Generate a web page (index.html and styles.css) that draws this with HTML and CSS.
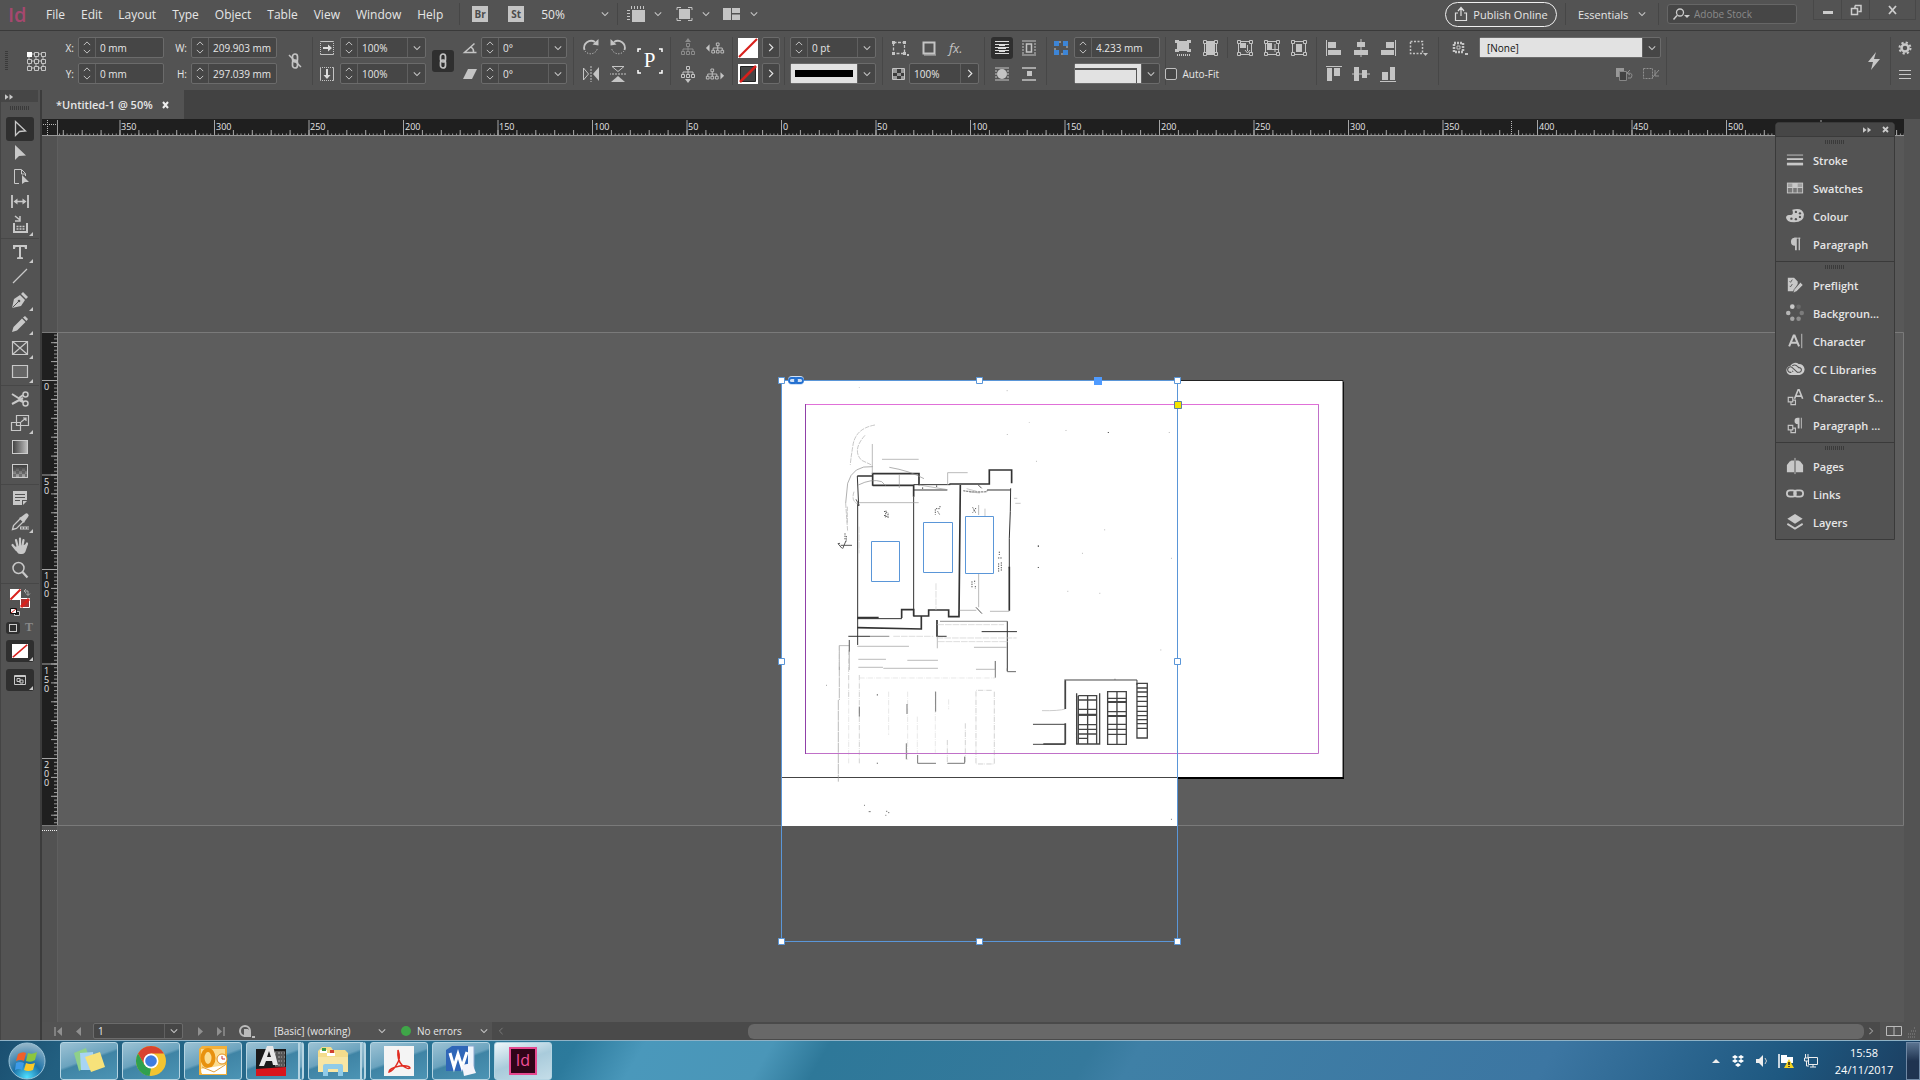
FILE: index.html
```html
<!DOCTYPE html>
<html lang="en">
<head>
<meta charset="UTF-8">
<title>*Untitled-1 @ 50%</title>
<link rel="stylesheet" href="styles.css">
</head>
<body>

<!-- shared icons -->
<svg class="defs" aria-hidden="true">
	<symbol id="down" viewBox="0 0 10 6"><path d="M1 1l4 4 4-4" fill="none" stroke="currentColor" stroke-width="1.3"/></symbol>
	<symbol id="right" viewBox="0 0 6 10"><path d="M1 1l4 4-4 4" fill="none" stroke="currentColor" stroke-width="1.3"/></symbol>
	<symbol id="spin" viewBox="0 0 10 16"><path d="M1 5l4-4 4 4M1 11l4 4 4-4" fill="none" stroke="currentColor" stroke-width="1.2"/></symbol>
	<symbol id="chain" viewBox="0 0 20 20"><g fill="none" stroke="currentColor" stroke-width="1.7"><rect x="7.500" y="3" width="5" height="8" rx="2.500"/><rect x="7.500" y="9" width="5" height="8" rx="2.500"/></g></symbol>
	<symbol id="rotate" viewBox="0 0 20 20"><path d="M3.500 12A7 7 0 0 1 14 4" fill="none" stroke="currentColor" stroke-width="1.8"/><path d="M11.500 6.500l6 1V1z" fill="currentColor"/><path d="M4 13a7 7 0 0 0 12.500-3" fill="none" stroke="currentColor" stroke-dasharray="1.200 1.500"/></symbol>
	<symbol id="flip" viewBox="0 0 20 20"><path d="M2.500 4v12l5-6z" fill="none" stroke="currentColor"/><path d="M10 2v16" stroke="currentColor" stroke-dasharray="2 1"/><path d="M18 3v14l-6-7z" fill="currentColor"/></symbol>
	<symbol id="tree" viewBox="0 0 20 20"><path d="M8.500 5.500h3v3h-3zM3.500 13.500h3v3h-3zM8.500 13.500h3v3h-3zM13.500 13.500h3v3h-3zM10 8.500v5M5 13.500v-2.500h10v2.500" fill="none" stroke="currentColor"/><path d="M10 0l3 4H7z" fill="currentColor"/></symbol>
	<symbol id="treeside" viewBox="0 0 22 20"><path d="M12.500 4.500h3v3h-3zM7.500 12.500h3v3h-3zM12.500 12.500h3v3h-3zM17.500 12.500h3v3h-3zM14 7.500v5M9 12.500V10h10v2.500" fill="none" stroke="currentColor"/><path d="M1 10l4-4v8z" fill="currentColor"/></symbol>
	<symbol id="corners" viewBox="0 0 20 20"><path d="M3.500 3.500h13v13h-13z" fill="none" stroke="currentColor"/><path d="M2.500 2.500h3v3h-3zM14.500 2.500h3v3h-3zM2.500 14.500h3v3h-3zM14.500 14.500h3v3h-3z" fill="#535353" stroke="currentColor"/></symbol>
	<symbol id="alignl" viewBox="0 0 20 20"><path d="M2.500 2v16" stroke="currentColor"/><path d="M4 4h8v6H4zM4 12h13v5H4z" fill="currentColor"/></symbol>
	<symbol id="alignc" viewBox="0 0 20 20"><path d="M10 1v18" stroke="currentColor"/><path d="M6 4h8v5H6zM3 12h14v5H3z" fill="currentColor"/></symbol>
	<symbol id="none" viewBox="0 0 20 20"><path d="M0 0h20v20H0z" fill="#fff"/><path d="M1 19L19 1" stroke="#d8201c" stroke-width="2.200"/></symbol>
	<symbol id="chev2" viewBox="0 0 10 6"><path d="M0 0l4 3-4 3zM5 0l4 3-4 3z" fill="currentColor"/></symbol>
	<symbol id="pilcrow" viewBox="0 0 20 20"><path d="M10 3v9a4.500 4.500 0 0 1 0-9zM10 3h2v14h-2zM14 3h1.500v14H14z" fill="currentColor"/><path d="M9 3h7v1H9z" fill="currentColor"/></symbol>
	<symbol id="copies" viewBox="0 0 20 20"><path d="M2.500 10.500h5v5h-5zM5.500 16v2.500h5v-5H8" fill="none" stroke="currentColor" stroke-width="1.3"/></symbol>
	<symbol id="cc" viewBox="0 0 22 16"><path d="M7 14.500a5 5 0 0 1-1-10 6 6 0 0 1 9-2 6 6 0 0 1 1 12z" fill="#ccc"/><path d="M14 12L8 6.500a3 3 0 1 0-1 5M9 11l-1-1M8 4.500a4.500 4.500 0 0 1 6 1l1 1a2.500 2.500 0 1 1 1 5H13" fill="none" stroke="#555" stroke-width="1.2"/></symbol>
</svg>

<header class="menubar">
	<span class="logo">Id</span>
	<nav class="menus">
		<a href="#">File</a><a href="#">Edit</a><a href="#">Layout</a><a href="#">Type</a><a href="#">Object</a><a href="#">Table</a><a href="#">View</a><a href="#">Window</a><a href="#">Help</a>
	</nav>
	<i class="vsep"></i>
	<button class="badge">Br</button>
	<button class="badge">St</button>
	<select class="zoom" aria-label="Zoom level"><option>50%</option></select>
	<svg class="chev" ><use href="#down"/></svg>
	<i class="vsep"></i>
	<button class="viewbtn" aria-label="View options"><svg width="20" height="18" viewBox="0 0 20 18"><path d="M6 5h13v12H6z" fill="#c4c4c4"/><path d="M5 2.500h14M2.500 5v12" stroke="#c4c4c4" stroke-width="3" stroke-dasharray="1 2"/></svg><svg class="chev"><use href="#down"/></svg></button>
	<button class="viewbtn" aria-label="Screen mode"><svg width="20" height="18" viewBox="0 0 20 18"><path d="M5 4h11v10H5z" fill="#c4c4c4"/><path d="M3 5V2.500h4M14 2.500h4V5M3 13v2.500h4M14 15.500h4V13" fill="none" stroke="#c4c4c4"/></svg><svg class="chev"><use href="#down"/></svg></button>
	<button class="viewbtn" aria-label="Arrange documents"><svg width="20" height="18" viewBox="0 0 20 18"><path d="M1 3h8v12H1zM10 3h8v5h-8zM10 9.500h8V15h-8z" fill="#c4c4c4"/></svg><svg class="chev"><use href="#down"/></svg></button>
	<span class="grow"></span>
	<button class="publish"><svg width="14" height="16" viewBox="0 0 14 16"><path d="M4 7H1.500v7.500h11V7H10M7 10V2M4 5l3-3.500L10 5" fill="none" stroke="#ddd" stroke-width="1.2"/></svg>Publish Online</button>
	<i class="vsep"></i>
	<button class="workspace">Essentials<svg class="chev"><use href="#down"/></svg></button>
	<i class="vsep"></i>
	<label class="search"><svg width="20" height="14" viewBox="0 0 20 14"><path d="M5 8.500L1.500 12.500" stroke="#ccc" stroke-width="1.5"/><circle cx="8" cy="5.500" r="3.500" fill="none" stroke="#ccc" stroke-width="1.300"/><path d="M12 8h6l-3 3z" fill="#ccc"/></svg><input type="search" placeholder="Adobe Stock" aria-label="Adobe Stock"></label>
	<div class="winbtns">
		<button aria-label="Minimise"><svg width="12" height="12"><path d="M1 7h10v3H1z" fill="#ccc"/></svg></button>
		<button aria-label="Restore"><svg width="12" height="12"><path d="M5 1.500h6v6H8.500M5 4V1.500M1.500 4.500h6v6h-6z" fill="none" stroke="#ccc" stroke-width="1.500"/></svg></button>
		<button aria-label="Close"><svg width="12" height="12"><path d="M2 2l7 8M9 2l-7 8" stroke="#ccc" stroke-width="1.800"/></svg></button>
	</div>
</header>

<section class="control">
	<div class="refpoint">
		<i class="grip-v"></i>
		<svg width="20" height="20" viewBox="0 0 20 20"><path d="M3 3h14v14H3zM3 10h14M10 3v14" fill="none" stroke="#c4c4c4"/><g fill="#535353" stroke="#c4c4c4"><path d="M8.500 1.500h4v4h-4zM15.500 1.500h4v4h-4zM1.500 8.500h4v4h-4zM8.500 8.500h4v4h-4zM15.500 8.500h4v4h-4zM1.500 15.500h4v4h-4zM8.500 15.500h4v4h-4zM15.500 15.500h4v4h-4z"/></g><path d="M1 1h5v5H1z" fill="#fff"/></svg>
	</div>
	<div class="group pos">
		<label for="fx">X:</label>
		<div class="field"><svg class="spin"><use href="#spin"/></svg><input id="fx" value="0 mm"></div>
		<label for="fw">W:</label>
		<div class="field"><svg class="spin"><use href="#spin"/></svg><input id="fw" value="209.903 mm"></div>
		<label for="fy">Y:</label>
		<div class="field"><svg class="spin"><use href="#spin"/></svg><input id="fy" value="0 mm"></div>
		<label for="fh">H:</label>
		<div class="field"><svg class="spin"><use href="#spin"/></svg><input id="fh" value="297.039 mm"></div>
		<button class="tall" aria-label="Constrain proportions"><svg class="ic"><use href="#chain"/><path d="M4 4l12 12" stroke="#c4c4c4" stroke-width="1.500"/></svg></button>
	</div>
	<div class="group scale">
		<svg class="ic" viewBox="0 0 20 20"><path d="M3.500 3.500h13v13h-13z" fill="none" stroke="#c4c4c4" /><path d="M3 4v12M17 4v12" stroke="#535353" stroke-dasharray="1 1" stroke-width="2"/><path d="M6 9h5V6.500l4 3.500-4 3.500V11H6z" fill="#ddd"/></svg>
		<div class="field"><svg class="spin"><use href="#spin"/></svg><input aria-label="Scale X" value="100%"><button aria-label="Scale X list"><svg class="chev"><use href="#down"/></svg></button></div>
		<svg class="ic" viewBox="0 0 20 20"><path d="M3.500 3.500h13v13h-13z" fill="none" stroke="#c4c4c4"/><path d="M4 3h12M4 17h12" stroke="#535353" stroke-dasharray="1 1" stroke-width="2"/><path d="M9 5h2v6h2.500L10 15l-3.500-4H9z" fill="#ddd"/></svg>
		<div class="field"><svg class="spin"><use href="#spin"/></svg><input aria-label="Scale Y" value="100%"><button aria-label="Scale Y list"><svg class="chev"><use href="#down"/></svg></button></div>
		<button class="tall pressed" aria-label="Link scale"><svg class="ic"><use href="#chain"/></svg></button>
	</div>
	<div class="group angle">
		<svg class="ic" viewBox="0 0 20 20"><path d="M16.500 14.500h-12l10-9M11 9q3 2 2.500 5" fill="none" stroke="#c4c4c4" stroke-width="1.500"/></svg>
		<div class="field"><svg class="spin"><use href="#spin"/></svg><input aria-label="Rotation" value="0°"><button aria-label="Rotation list"><svg class="chev"><use href="#down"/></svg></button></div>
		<svg class="ic" viewBox="0 0 20 20"><path d="M8 5h9l-5 10H3z" fill="#c4c4c4"/></svg>
		<div class="field"><svg class="spin"><use href="#spin"/></svg><input aria-label="Shear" value="0°"><button aria-label="Shear list"><svg class="chev"><use href="#down"/></svg></button></div>
	</div>
	<div class="group sep icons flips">
		<svg class="ic"><use href="#rotate"/></svg>
		<svg class="ic mirror"><use href="#rotate"/></svg>
		<span class="tall pref"><svg width="26" height="26" viewBox="0 0 26 26"><path d="M1 4V1h3M22 1h3v3M1 22v3h3M22 25h3v-3" fill="none" stroke="#fff" stroke-width="1.500"/></svg><b>P</b></span>
		<svg class="ic"><use href="#flip"/></svg>
		<svg class="ic quarter"><use href="#flip"/></svg>
	</div>
	<div class="group sep icons two">
		<svg class="ic dim"><use href="#tree"/></svg>
		<svg class="ic"><use href="#treeside"/></svg>
		<svg class="ic" viewBox="0 0 20 20"><path d="M8.500 2.500h3v3h-3zM3.500 10.500h3v3h-3zM8.500 10.500h3v3h-3zM13.500 10.500h3v3h-3zM10 5.500v5M5 10.500V8h10v2.500" fill="none" stroke="#c4c4c4"/><path d="M10 19l3-4H7z" fill="#c4c4c4"/></svg>
		<svg class="ic" viewBox="0 0 22 20"><path d="M6.500 4.500h3v3h-3zM1.500 12.500h3v3h-3zM6.500 12.500h3v3h-3zM11.500 12.500h3v3h-3zM8 7.500v5M3 12.500V10h10v2.500" fill="none" stroke="#c4c4c4"/><path d="M21 12l-4-4v8z" fill="#c4c4c4"/></svg>
	</div>
	<div class="group sep swatches">
		<svg width="20" height="20"><use href="#none"/></svg>
		<button class="more" aria-label="Fill"><svg><use href="#right"/></svg></button>
		<svg width="20" height="20" viewBox="0 0 20 20"><path d="M0 0h20v20H0z" fill="#fff"/><path d="M2.500 2.500h15v15h-15z" fill="#444" stroke="#222"/><path d="M2 18L18 2" stroke="#d8201c" stroke-width="2.500"/></svg>
		<button class="more" aria-label="Stroke"><svg><use href="#right"/></svg></button>
	</div>
	<div class="group sep stroke">
		<div class="field"><svg class="spin"><use href="#spin"/></svg><input aria-label="Stroke weight" value="0 pt"><button aria-label="Weight list"><svg class="chev"><use href="#down"/></svg></button></div>
		<div class="field"><span class="sample line"></span><button aria-label="Stroke type"><svg class="chev"><use href="#down"/></svg></button></div>
	</div>
	<div class="group sep effects">
		<div class="row">
			<svg class="ic" viewBox="0 0 20 20"><path d="M4.500 4.500h11v11h-11z" fill="none" stroke="#c4c4c4" stroke-width="1.300" stroke-dasharray="3 1.500"/><path d="M3 3h3v3H3zM14 3h3v3h-3zM3 14h3v3H3zM14 14h3v3h-3z" fill="#c4c4c4"/><path d="M18 16h2v2h-2z" fill="#c4c4c4"/></svg>
			<svg class="ic" viewBox="0 0 20 20"><path d="M5 16h12v2H5z" fill="#888"/><path d="M4.500 4.500h11v11h-11z" fill="#535353" stroke="#c4c4c4" stroke-width="2"/></svg>
			<i class="fx">fx.</i>
		</div>
		<div class="row">
			<svg class="ic" viewBox="0 0 20 20"><path d="M3.500 4.500h12v11h-12z" fill="#3c3c3c" stroke="#c4c4c4"/><path d="M4 5h4v4H4zM12 5h3v4h-3zM8 9h4v3H8zM4 12h4v3H4zM12 12h3v3h-3z" fill="#999"/></svg>
			<div class="field"><input aria-label="Opacity" value="100%"><button aria-label="Opacity slider"><svg class="more-arrow"><use href="#right"/></svg></button></div>
		</div>
	</div>
	<div class="group sep icons two wrap">
		<button class="pressed" aria-label="No text wrap"><svg class="ic" viewBox="0 0 20 20"><path d="M3 3.500h14M3 6.500h14M3 9.500h14M3 12.500h14M3 15.500h14" stroke="#ddd"/><path d="M7 6h6v2H7zM6 9h8v2H6zM7 12h6v2H7z" fill="#ddd"/></svg></button>
		<svg class="ic" viewBox="0 0 20 20"><path d="M3 3h14M3 17h14M3 6h2M3 9h2M3 12h2M3 15h2M15 6h2M15 9h2M15 12h2M15 15h2" stroke="#c4c4c4"/><path d="M7.500 6h5v8h-5z" fill="none" stroke="#c4c4c4" stroke-width="1.500"/></svg>
		<svg class="ic" viewBox="0 0 20 20"><path d="M3 4h14M3 16h14M3 7h2M3 10h2M3 13h2M15 7h2M15 10h2M15 13h2" stroke="#c4c4c4"/><circle cx="10" cy="10" r="5" fill="#c4c4c4"/></svg>
		<svg class="ic" viewBox="0 0 20 20"><path d="M3 4h14M3 16h14" stroke="#c4c4c4" stroke-width="1.500"/><path d="M8 7h5v5H8z" fill="#c4c4c4"/></svg>
	</div>
	<div class="group sep corner">
		<svg class="ic" viewBox="0 0 20 20"><path d="M4 4h12v12H4z" fill="none" stroke="#c4c4c4" stroke-dasharray="2 2"/><path d="M3 3h5v5H3zM12 3h5v5h-5zM3 12h5v5H3zM12 12h5v5h-5z" fill="#3d85d6"/></svg>
		<div class="field"><svg class="spin"><use href="#spin"/></svg><input aria-label="Corner size" value="4.233 mm"></div>
		<span></span>
		<div class="field"><span class="sample edge"></span><button aria-label="Corner shape"><svg class="chev"><use href="#down"/></svg></button></div>
	</div>
	<div class="group sep icons two">
		<svg class="ic" viewBox="0 0 20 20"><path d="M4 3h12v10H4z" fill="#c4c4c4"/><path d="M2 2h4v3H2zM14 2h4v3h-4zM2 11h4v3H2zM14 11h4v3h-4z" fill="#c4c4c4"/><path d="M4 17h13" stroke="#c4c4c4" stroke-dasharray="1 1" stroke-width="2"/></svg>
		<svg class="ic" viewBox="0 0 20 20"><path d="M6 3h9v14H6z" fill="#c4c4c4"/><path d="M3.500 2.500h3v3h-3zM14.500 2.500h3v3h-3zM3.500 14.500h3v3h-3zM14.500 14.500h3v3h-3zM4.500 5v10M16.500 5v10" fill="none" stroke="#c4c4c4"/></svg>
		<label class="autofit"><input type="checkbox">Auto-Fit</label>
	</div>
	<div class="group sepshort icons three">
		<svg class="ic"><use href="#corners"/><path d="M5 5h6v5H5z" fill="#c4c4c4"/><path d="M12.500 7v6M10 12l2.500 3 2.500-3" fill="none" stroke="#c4c4c4"/></svg>
		<svg class="ic"><use href="#corners"/><path d="M5 5h5v7H5z" fill="#c4c4c4"/><path d="M13 6v8M10 11.500h6" fill="none" stroke="#c4c4c4"/></svg>
		<svg class="ic"><use href="#corners"/><path d="M7 6h6v8H7z" fill="#c4c4c4"/></svg>
	</div>
	<div class="group sep icons four">
		<svg class="ic"><use href="#alignl"/></svg>
		<svg class="ic"><use href="#alignc"/></svg>
		<svg class="ic mirror"><use href="#alignl"/></svg>
		<svg class="ic" viewBox="0 0 20 20"><path d="M2.500 3.500h12v12h-12z" fill="none" stroke="#c4c4c4" stroke-width="1.500" stroke-dasharray="2 1.500"/><path d="M15 15h5l-2.500 3z" fill="#c4c4c4"/></svg>
		<svg class="ic quarter"><use href="#alignl"/></svg>
		<svg class="ic quarter"><use href="#alignc"/></svg>
		<svg class="ic unquarter"><use href="#alignl"/></svg>
	</div>
	<div class="group sep style">
		<div class="row">
			<svg class="ic" viewBox="0 0 20 20"><path d="M5 5h9v9H5z" fill="none" stroke="#c4c4c4" stroke-width="2.500" stroke-dasharray="2 1"/><path d="M8 8h3v3H8z" fill="none" stroke="#c4c4c4"/><path d="M16 15h3v2h-3z" fill="#c4c4c4"/></svg>
			<div class="field light"><select aria-label="Object style"><option>[None]</option></select><button aria-label="Object style list"><svg class="chev"><use href="#down"/></svg></button></div>
		</div>
		<div class="row end">
			<svg class="ic dim" viewBox="0 0 20 20"><path d="M2 4h8v9H2z" fill="#ddd"/><path d="M5.500 7.500h7v9h-7z" fill="#333" stroke="#bbb"/><path d="M14 14h3q3-5-3-5M16 6l-3 3 3 2" fill="none" stroke="#ccc"/></svg>
			<svg class="ic dim" viewBox="0 0 20 20"><path d="M2.500 4.500h9v10h-9z" fill="none" stroke="#ccc" stroke-dasharray="2 1"/><path d="M11 14l7-8M14 6v6h4" fill="none" stroke="#ccc"/></svg>
		</div>
	</div>
	<div class="group sep last"></div>
	<button class="bolt" aria-label="Quick apply"><svg width="14" height="18" viewBox="0 0 14 18"><path d="M9 0L1 10h5l-2 8 9-11H7z" fill="#c8c8c8"/></svg></button>
	<div class="group sep icons one">
		<svg class="ic" viewBox="0 0 20 20"><circle cx="10" cy="10" r="3.500" fill="none" stroke="#c8c8c8" stroke-width="2.500"/><circle cx="10" cy="10" r="5.500" fill="none" stroke="#c8c8c8" stroke-width="2" stroke-dasharray="2.200 2.120"/></svg>
		<svg class="ic" viewBox="0 0 20 20"><path d="M4 6.500h12M4 10.500h12M4 14.500h12" stroke="#c8c8c8"/></svg>
	</div>
</section>

<main class="work">
	<aside class="tools">
		<div class="toolhead"><svg width="9" height="6"><use href="#chev2"/></svg></div>
		<i class="grip"></i>
		<button class="pressed" aria-label="Selection"><svg class="ic" viewBox="0 0 20 20"><path d="M5.500 2.500v14l4-4 6-.500z" fill="none" stroke="#c8c8c8" stroke-width="1.300"/></svg></button>
		<button aria-label="Direct selection"><svg class="ic" viewBox="0 0 20 20"><path d="M5 2v15l4-4 7-.500z" fill="#c8c8c8"/></svg></button>
		<button aria-label="Page"><svg class="ic" viewBox="0 0 20 20"><path d="M9 16.500H4.500v-14h7l4 4V9M11.500 3v4h4" fill="none" stroke="#c8c8c8"/><path d="M12 8v9l3-2h4z" fill="#c8c8c8"/></svg></button>
		<button aria-label="Gap"><svg class="ic" viewBox="0 0 20 20"><path d="M2 4v13M18 4v13" stroke="#c8c8c8" stroke-width="1.800"/><path d="M6 10.500h8" stroke="#c8c8c8" stroke-width="1.500"/><path d="M3.500 10.500l4-3v6zM16.500 10.500l-4-3v6z" fill="#c8c8c8"/></svg></button>
		<button class="sub" aria-label="Content collector"><svg class="ic" viewBox="0 0 20 20"><path d="M4 8v9h13V8" fill="none" stroke="#c8c8c8" stroke-width="2"/><path d="M6.500 11.500h8M6.500 14h8" stroke="#c8c8c8" stroke-width="1.500" stroke-dasharray="2 1"/><path d="M5 1l5 4M10 1v5H5" fill="none" stroke="#c8c8c8" stroke-width="1.500"/></svg></button>
		<hr>
		<button class="sub" aria-label="Type"><svg class="ic" viewBox="0 0 20 20"><path d="M3 3h14v4h-2l-.500-2H11v10l2 .500V17H7v-1.500L9 15V5H5.500L5 7H3z" fill="#c8c8c8"/></svg></button>
		<button aria-label="Line"><svg class="ic" viewBox="0 0 20 20"><path d="M3 17L17 3" stroke="#c8c8c8" stroke-width="1.300"/></svg></button>
		<button class="sub" aria-label="Pen"><svg class="ic" viewBox="0 0 20 20"><path d="M2 18l2-9 6-4 5 5-4 6z" fill="#c8c8c8"/><path d="M11 4l2-2 5 5-2 2z" fill="#c8c8c8"/><path d="M2.500 17.500l6-6" stroke="#535353"/><circle cx="9" cy="11" r="1.300" fill="#535353"/></svg></button>
		<button class="sub" aria-label="Pencil"><svg class="ic" viewBox="0 0 20 20"><path d="M2 18l1.500-5L12 4.500l3.500 3.500L7 16.500zM13 3.500L15 2l3 3-1.500 2z" fill="#c8c8c8"/></svg></button>
		<button class="sub" aria-label="Rectangle frame"><svg class="ic" viewBox="0 0 20 20"><path d="M2.500 3.500h15v13h-15zM2.500 3.500l15 13M17.500 3.500l-15 13" fill="none" stroke="#c8c8c8" stroke-width="1.200"/></svg></button>
		<button class="sub" aria-label="Rectangle"><svg class="ic" viewBox="0 0 20 20"><path d="M2.500 3.500h15v12h-15z" fill="#666" stroke="#c8c8c8" stroke-width="1.200"/></svg></button>
		<hr>
		<button aria-label="Scissors"><svg class="ic" viewBox="0 0 20 20"><path d="M2 5l11 7M2 15l11-6" stroke="#c8c8c8" stroke-width="2"/><circle cx="15.500" cy="5.500" r="2.500" fill="none" stroke="#c8c8c8" stroke-width="1.500"/><circle cx="15.500" cy="14.500" r="2.500" fill="none" stroke="#c8c8c8" stroke-width="1.500"/><path d="M9 9l4-3M9 11l4 2" stroke="#c8c8c8" stroke-width="2"/></svg></button>
		<button class="sub" aria-label="Free transform"><svg class="ic" viewBox="0 0 20 20"><path d="M6.500 2.500h12v10h-12zM1.500 9.500h9v8h-9zM11 9l5-4M13 5h3v3" fill="none" stroke="#c8c8c8" stroke-width="1.200"/></svg></button>
		<button aria-label="Gradient swatch"><span class="grad"></span></button>
		<button aria-label="Gradient feather"><span class="grad feather"></span></button>
		<hr>
		<button aria-label="Note"><svg class="ic" viewBox="0 0 20 20"><path d="M3 3h14v9h-5v5H3zM13 13h4l-4 4z" fill="#c8c8c8"/><path d="M5 6.500h10M5 9.500h10M5 12.500h5" stroke="#535353"/></svg></button>
		<button class="sub" aria-label="Eyedropper"><svg class="ic" viewBox="0 0 20 20"><path d="M2.500 17.500l1-4 7-7 3 3-7 7z" fill="none" stroke="#c8c8c8" stroke-width="1.300"/><path d="M9 6l5 5 1-2 3-4a2 2 0 0 0-3-3l-4 3z" fill="#c8c8c8"/><path d="M10 16h9" stroke="#c8c8c8" stroke-width="3"/><path d="M11 16h8" stroke="#535353" stroke-width="1.200" stroke-dasharray="2 1"/></svg></button>
		<button aria-label="Hand"><svg class="ic" viewBox="0 0 20 20"><path d="M4 11l3 5q1 2 3 2h2q3 0 4-4l2-6" fill="#c8c8c8"/><path d="M2.500 9l4 5M6 4l2 8M10 2.500V11M13.500 4L12 12M17 7.500L14 13" stroke="#c8c8c8" stroke-width="2.200" stroke-linecap="round"/></svg></button>
		<button aria-label="Zoom"><svg class="ic" viewBox="0 0 20 20"><circle cx="8.500" cy="8" r="5.500" fill="none" stroke="#c8c8c8" stroke-width="1.500"/><path d="M12.500 12l5 5.500" stroke="#c8c8c8" stroke-width="2.200"/></svg></button>
		<hr>
		<svg class="fillstroke" width="24" height="30" viewBox="0 0 24 30"><path d="M2 2h11v11H2z" fill="#fff"/><path d="M2.500 12.500l10-10" stroke="#d8201c" stroke-width="2"/><path d="M12.500 11.500h9v9h-9z" fill="#a33" stroke="#fff"/><path d="M13 20l8-8" stroke="#d8201c" stroke-width="3"/><path d="M16 4h4v4M18 2l-2 2 2 2M18 6.500l2 2 2-2" fill="none" stroke="#aaa"/><path d="M6.500 24.500h5v4h-5z" fill="#222" stroke="#ccc"/><path d="M2.500 21.500h6v5h-6z" fill="#fff" stroke="#111"/><path d="M3 26l5-4" stroke="#d8201c"/></svg>
		<div class="affects"><button class="pressed" aria-label="Affects container"><i></i></button><b>T</b></div>
		<button class="pressed wide sub" aria-label="Apply none"><svg width="16" height="14" viewBox="0 0 20 20" preserveAspectRatio="none"><use href="#none"/></svg></button>
		<button class="pressed wide sub" aria-label="Screen mode"><svg width="14" height="12" viewBox="0 0 14 12"><path d="M1.500 1.500h11v9h-11zM1 2.500h12M4 4.500h3v3H4zM7 6h3v3H7z" fill="none" stroke="#c8c8c8"/></svg></button>
	</aside>

	<section class="document">
		<div class="tabs"><div class="tab">*Untitled-1 @ 50%<button aria-label="Close tab"><svg width="8" height="8"><path d="M1 1l5 6M6 1L1 7" stroke="#eee" stroke-width="2"/></svg></button></div></div>
		<svg class="board">
			<defs>
				<pattern id="tick2" width="3.780" height="5" x="781" y="131" patternUnits="userSpaceOnUse"><path d="M0 2.500h1v3H0z" fill="#999"/></pattern>
				<pattern id="tick10" width="18.900" height="6" x="781" y="130" patternUnits="userSpaceOnUse"><path d="M0 0h1v6H0z" fill="#a5a5a5"/></pattern>
				<pattern id="tick50" width="94.500" height="16" x="781" y="120" patternUnits="userSpaceOnUse"><path d="M0 0h1v16H0z" fill="#a5a5a5"/></pattern>
				<pattern id="vt2" width="3" height="3.780" x="54" y="380" patternUnits="userSpaceOnUse"><path d="M0 0h3v1H0z" fill="#999"/></pattern>
				<pattern id="vt10" width="6" height="18.900" x="51" y="380" patternUnits="userSpaceOnUse"><path d="M0 0h6v1H0z" fill="#a5a5a5"/></pattern>
				<pattern id="vt50" width="16" height="94.500" x="42" y="380" patternUnits="userSpaceOnUse"><path d="M0 0h16v1H0z" fill="#a5a5a5"/></pattern>
			</defs>
			<g transform="translate(-42 -119)">
				<path d="M42 119h1862v904H42z" fill="#585858"/>
				<path d="M58 332h1846v494H58z" fill="#5d5d5d"/>
				<path d="M42 119h15v904H42z" fill="#525252"/>
				<path d="M57.500 136v887" stroke="#5f5f5f"/>
				<path d="M42 332.500h1861.500v493H42" fill="none" stroke="#7a7a7a"/>

				<!-- horizontal ruler -->
				<path d="M42 119h1862v17H42z" fill="#1f1f1f"/>
				<path d="M58 131h1846v5H58z" fill="url(#tick2)"/>
				<path d="M58 130h1846v6H58z" fill="url(#tick10)"/>
				<path d="M58 120h1846v16H58z" fill="url(#tick50)"/>
				<path d="M57.500 120v16M42 135.500h1862" stroke="#999"/>
				<path d="M47.500 120v15M43 124.500h14M1511.500 121v14" stroke="#bbb" stroke-dasharray="1 1"/>
				<g class="rule">
					<text x="121" y="130">350</text><text x="216" y="130">300</text><text x="310" y="130">250</text><text x="405" y="130">200</text><text x="499" y="130">150</text><text x="594" y="130">100</text><text x="688" y="130">50</text><text x="783" y="130">0</text><text x="877" y="130">50</text><text x="972" y="130">100</text><text x="1066" y="130">150</text><text x="1161" y="130">200</text><text x="1255" y="130">250</text><text x="1350" y="130">300</text><text x="1444" y="130">350</text><text x="1539" y="130">400</text><text x="1633" y="130">450</text><text x="1728" y="130">500</text>
				</g>

				<!-- vertical ruler -->
				<path d="M42 333h15v492H42z" fill="#1f1f1f"/>
				<path d="M54 333h3v492h-3z" fill="url(#vt2)"/>
				<path d="M51 333h6v492h-6z" fill="url(#vt10)"/>
				<path d="M42 333h15v492H42z" fill="url(#vt50)"/>
				<path d="M57.500 333v492" stroke="#999"/>
				<path d="M42 830.500h15" stroke="#eee" stroke-dasharray="1 1"/>
				<g class="rule">
					<text x="44" y="390">0</text>
					<text y="485"><tspan x="44">5</tspan><tspan x="44" dy="9">0</tspan></text>
					<text y="579"><tspan x="44">1</tspan><tspan x="44" dy="9">0</tspan><tspan x="44" dy="9">0</tspan></text>
					<text y="674"><tspan x="44">1</tspan><tspan x="44" dy="9">5</tspan><tspan x="44" dy="9">0</tspan></text>
					<text y="768"><tspan x="44">2</tspan><tspan x="44" dy="9">0</tspan><tspan x="44" dy="9">0</tspan></text>
				</g>

				<!-- page and placed scan -->
				<path d="M783 382h561v397H783z" fill="#000"/>
				<path d="M781 380h562v397H781z" fill="#fff"/>
				<path d="M781 381h396v445H781z" fill="#fff"/>
				<path d="M781 777.500h397" stroke="#444"/>
				<path d="M1177 380.500h166v397" fill="none" stroke="#222"/>
				<path d="M782 827h395v114H782z" fill="#575757"/>

				<g transform="translate(770 370) scale(.3333)" fill="none" stroke="#333" stroke-width="3">
					<path stroke-width="5" d="M308 347V311H447v35M308 346h123v34M262 318h46M538 342h120v-42h67v40M571 345l-4 395h-31v-20h-60v18h-44M395 744v-25h36v20M262 773l192 4v-37M718 590v132M501 750v50M262 743h64"/>
					<path d="M262 318l4 90M263 400v425M431 380V740M431 344h110M432 360h100M722 355l-1 70-3 80v90M652 360h70M262 746h134M635 785h106M712 754v149M235 799h65M503 799h27"/>
					<path stroke="#555" stroke-width="2" d="M510 754h202M300 799h58"/>
					<path stroke="#999" stroke-width="2" d="M307 222v90M336 268h110M533 345v-37h60M388 312v42M266 398h180M569 721h50M660 724h58M626 405v30M626 612v100M502 800v35M262 829h155M612 832h98M265 868h83M265 892h74M340 895h164M412 871h92M618 898h58v-25M238 810v90M208 900V827h30M447 345l85 14"/>
					<path stroke="#ccc" stroke-width="2" d="M500 804h240M504 815h210M502 764h200M370 799h120M498 640v80M267 470v80" stroke-dasharray="20 3"/>
					<path stroke="#888" stroke-width="2" d="M358 292q60 10 104 34M308 290q-60-5-75 50l-6 60M265 345q40-20 70-10l12 12"/>
					<path stroke="#aaa" stroke-width="2" d="M315 165q-58 10-66 60t-8 60M285 196q-40 45-10 75l30 14M252 365q-10 30 14 38M227 400l6 85M232 410v50" stroke-dasharray="14 3"/>
					<path stroke="#555" d="M618 712l18 19M258 388l10 18M625 345l10 10M458 352v5M500 346v5M216 535l-12-14 6-1M212 526h34M218 536l10-24"/>
					<path stroke="#888" stroke-width="4" d="M580 362q30 6 70 3l4-6" stroke-dasharray="7 2"/>
					<path stroke="#555" stroke-dasharray="4 3" stroke-width="3" d="M342 424l14 6M342 436l14 6M348 422l-2 22M354 432v12M496 418v16M498 416h12M503 424l6 10M510 408v4M608 412l10 18M618 414l-10 14M606 634v18M614 632v8M616 648v8M688 545v10M684 564h12M686 580v26M694 577v28M225 490v20M229 498v16"/>
					<path stroke="#aaa" stroke-width="2" d="M732 385h10M736 400h16M645 416v22M590 356l30 8M600 366l30 3"/>
					<path stroke="#333" d="M805 526v5M805 591v3M1015 186v3"/>
					<path stroke="#999" stroke-width="2" d="M798 274h3M936 550h3M1203 565h3M1198 186v3M712 192v3M268 52v2M778 156v2M888 180v3M710 62h3M1004 478v3M892 664h3M988 670h3M1171 840h3"/>
				</g>

				<g transform="translate(770 600) scale(.3333)" fill="none" stroke="#444" stroke-width="3">
					<path stroke="#666" d="M712 205v10h26M238 120v35"/>
					<path stroke="#999" stroke-width="2" d="M205 300v245M208 200v100" stroke-dasharray="30 2"/>
					<path stroke="#bbb" stroke-width="2" d="M208 136v64M236 150v150M268 225v265M618 490V271h48M673 275v217h-54M586 370v120M532 420v70" stroke-dasharray="16 4 2 3"/>
					<path stroke="#ddd" stroke-width="2" d="M236 300v190M356 275v130M413 275v205M496 273v185M536 298v30M442 350v110M268 234h408" stroke-dasharray="16 4 2 3"/>
					<path stroke="#777" d="M268 320v30M411 312v30M497 275v60M409 430v48M443 465v25h55M532 490h52v-20M322 282v5M322 488v4M676 183v50"/>
					<path d="M883 240h218v15M886 240v87M789 373h97v60h-97"/>
					<path stroke="#ccc" d="M886 327q-20 6-70 5"/>
					<path stroke-width="5" d="M886 242v85M886 370v62M820 432h66"/>
					<path stroke-width="4" d="M920 280v152h69V280M925 287h55v143M925 287v143M953 287v143M925 300h55M925 328h55M925 345h55M925 374h55M925 388h55M925 402h55M925 415h30"/>
					<path stroke-width="4" d="M1013 275h56v158h-56zM1041 275v158M1013 295h56M1013 305h56M1013 335h56M1013 348h56M1013 373h56M1013 388h56M1013 403h56M1101 250h31v164h-31zM1101 264h31M1101 276h31M1101 290h31M1101 304h31M1101 319h31M1101 334h31M1101 347h31M1101 359h31M1101 371h31M1101 385h31"/>
					<path stroke="#777" d="M296 635h6M348 634h4M354 638h4M282 616h3M346 646h3M1203 658h3M169 256h2M1033 238h4"/>
					<path stroke-width="6" d="M925 344h55M1013 306h56M1013 348h56"/>
				</g>

				<path d="M1318.500 404v349.500H805.500" fill="none" stroke="#c070c8"/>
				<path d="M1319 404.500H805" stroke="#e070d8"/>
				<path d="M805.500 404v350" stroke="#9040a8"/>

				<g fill="#fff" stroke="#5a96d8">
					<path d="M871.500 541.500h28v40h-28zM923.500 522.500h29v50h-29zM965.500 516.500h28v57h-28z"/>
					<path d="M781.500 380.500h396v561h-396z" fill="none"/>
					<path d="M778.500 377.500h6v6h-6zM976.500 377.500h6v6h-6zM1174.500 377.500h6v6h-6zM778.500 658.500h6v6h-6zM1174.500 658.500h6v6h-6zM778.500 938.500h6v6h-6zM976.500 938.500h6v6h-6zM1174.500 938.500h6v6h-6z"/>
				</g>
				<path d="M1094 377h8v8h-8z" fill="#4f9bff"/>
				<path d="M1174.500 401.500h7v7h-7z" fill="#f5e500" stroke="#5a7fa8"/>
				<rect x="788" y="376" width="16" height="9" rx="4" fill="#cfe0f6"/>
				<g fill="none" stroke="#2470d0" stroke-width="1.800"><rect x="789" y="378" width="8" height="5" rx="2.500"/><rect x="795" y="378" width="8" height="5" rx="2.500"/></g>
			</g>
		</svg>
		<footer class="status">
			<button class="nav dim" aria-label="First page"><svg width="9" height="9"><path d="M1 0v9" stroke="#ccc" stroke-width="1.500"/><path d="M8 0v9L3 4.500z" fill="#ccc"/></svg></button>
			<button class="nav dim" aria-label="Previous page"><svg width="9" height="9"><path d="M7 0v9L2 4.500z" fill="#ccc"/></svg></button>
			<div class="field pageno"><input aria-label="Page" value="1"><button aria-label="Page list"><svg class="chev"><use href="#down"/></svg></button></div>
			<button class="nav dim" aria-label="Next page"><svg width="9" height="9"><path d="M2 0v9l5-4.500z" fill="#ccc"/></svg></button>
			<button class="nav dim" aria-label="Last page"><svg width="9" height="9"><path d="M1 0v9l5-4.500z" fill="#ccc"/><path d="M8 0v9" stroke="#ccc" stroke-width="1.500"/></svg></button>
			<button class="nav open" aria-label="Open"><svg width="18" height="14" viewBox="0 0 18 14"><circle cx="7" cy="7" r="5" fill="none" stroke="#bbb" stroke-width="2"/><path d="M6 5h4l3 3v5H6z" fill="#bbb"/><path d="M14 12h3v2h-3z" fill="#bbb"/></svg></button>
			<button class="profile">[Basic] (working)<svg class="chev"><use href="#down"/></svg></button>
			<button class="errors"><i></i>No errors<svg class="chev"><use href="#down"/></svg></button>
			<div class="scroll"><svg width="6" height="8" viewBox="0 0 6 10"><path d="M5 1L1 5l4 4" fill="none" stroke="#888"/></svg><span></span><svg width="6" height="8"><use href="#right"/></svg></div>
			<svg class="split" width="40" height="16"><path d="M6.500 3.500h15v9h-15zM14 3v10" fill="none" stroke="#bbb"/><path d="M34 5h2M31 8h5M28 11h8M28 14h8" stroke="#888" stroke-dasharray="1 1"/></svg>
		</footer>
	</section>

	<aside class="panels">
		<div class="panelhead"><svg width="9" height="6"><use href="#chev2"/></svg><button aria-label="Close panels"><svg width="7" height="7"><path d="M1 1l5 5M6 1L1 6" stroke="#ccc" stroke-width="1.800"/></svg></button></div>
		<div class="dock">
			<i class="grip"></i>
			<button><svg class="ic" viewBox="0 0 20 20"><path d="M1 4.500h18" stroke="#c8c8c8"/><path d="M1 9h18" stroke="#c8c8c8" stroke-width="2"/><path d="M1 14.500h18" stroke="#c8c8c8" stroke-width="3"/></svg>Stroke</button>
			<button><svg class="ic" viewBox="0 0 20 20"><path d="M1 4h18v12H1z" fill="#c8c8c8"/><path d="M2 5h5v4H2zM13 5h5v4h-5z" fill="#a0a0a0"/><path d="M2 10h5v5H2zM8 10h4v5H8zM13 10h5v5h-5z" fill="#777"/></svg>Swatches</button>
			<button><svg class="ic" viewBox="0 0 20 20"><path d="M7 3q11-3 13 5 0 9-11 9-9 0-9-6 1-3 5-2 4 0 2-6z" fill="#c8c8c8"/><g fill="#535353"><circle cx="11" cy="5.500" r="1.300"/><circle cx="15.500" cy="7" r="1.300"/><circle cx="15.500" cy="11" r="1.300"/><circle cx="11" cy="13.500" r="1.300"/><circle cx="6" cy="13" r="1.300"/></g></svg>Colour</button>
			<button><svg class="ic"><use href="#pilcrow"/></svg>Paragraph</button>
		</div>
		<div class="dock">
			<i class="grip"></i>
			<button><svg class="ic" viewBox="0 0 20 20"><path d="M2 2h7l4 4v3l-5 8H2z" fill="#c8c8c8"/><path d="M4 6l1 1 2-3M4 11l1 1 2-3" fill="none" stroke="#535353"/><path d="M8 19l1-4 7-8 3 3-7 7z" fill="#c8c8c8" stroke="#535353" stroke-width=".7"/></svg>Preflight</button>
			<button><svg class="ic" viewBox="0 0 20 20"><g fill="#c8c8c8"><circle cx="7" cy="3" r="2.600"/><circle cx="2.500" cy="10" r="2.500" opacity=".85"/><circle cx="7" cy="16.500" r="2.500" opacity=".7"/><circle cx="14" cy="16.500" r="2.500" opacity=".5"/><circle cx="17.500" cy="10" r="2.500" opacity=".35"/><circle cx="14" cy="3" r="2.500" opacity=".18"/></g></svg>Backgroun...</button>
			<button><svg class="ic" viewBox="0 0 20 20"><path d="M3.500 16L8.500 4h1l5 12M5 12h8" fill="none" stroke="#c8c8c8" stroke-width="2.200"/><path d="M17.500 2v16" stroke="#c8c8c8"/></svg>Character</button>
			<button><svg class="ic" viewBox="0 0 22 16"><use href="#cc"/></svg>CC Libraries</button>
			<button><svg class="ic" viewBox="0 0 20 20"><use href="#copies"/><path d="M9.500 12L13.500 2h1l4 10M11 9h6" fill="none" stroke="#c8c8c8" stroke-width="1.800"/></svg>Character S...</button>
			<button><svg class="ic" viewBox="0 0 20 20"><use href="#copies"/><path d="M13 2v7a3.500 3.500 0 0 1 0-7zM13 2h2v12h-2zM16.500 2h1v12h-1z" fill="#c8c8c8"/></svg>Paragraph ...</button>
		</div>
		<div class="dock">
			<i class="grip"></i>
			<button><svg class="ic" viewBox="0 0 20 20"><path d="M6 4h3v13H1V9l4-5v5H2M14 4h-3v13h8V9l-4-5v5h3" fill="#c8c8c8"/><path d="M10 1v18" stroke="#c8c8c8"/></svg>Pages</button>
			<button><svg class="ic" viewBox="0 0 20 20"><g fill="none" stroke="#c8c8c8" stroke-width="2"><rect x="1" y="6" width="10" height="7" rx="3.500"/><rect x="9" y="6" width="10" height="7" rx="3.500"/></g></svg>Links</button>
			<button><svg class="ic" viewBox="0 0 20 20"><path d="M10 1l8.500 5.500L10 12 1.500 6.500z" fill="#c8c8c8"/><path d="M2 11l8 5 8-5 1 2-9 5.500L1 13z" fill="#c8c8c8"/></svg>Layers</button>
		</div>
	</aside>
</main>

<footer class="taskbar">
	<button class="start" aria-label="Start"><svg width="38" height="38" viewBox="0 0 38 38"><defs><radialGradient id="orb" cx=".5" cy=".95" r=".9"><stop offset="0" stop-color="#4fe0ff"/><stop offset=".45" stop-color="#1c72a8"/><stop offset="1" stop-color="#8fb2c6"/></radialGradient></defs><circle cx="19" cy="19" r="18" fill="url(#orb)" stroke="#9cc4d8"/><path d="M10 12q5-3 8-1l-2 8q-4-2-8 0z" fill="#f0602a"/><path d="M20 11q4 2 9-1l-2 8q-4 3-9 1z" fill="#8cc63e"/><path d="M8 21q4-2 8 0l-2 7q-3-2-7 0z" fill="#3d9be8"/><path d="M18 21q4 2 9 0l-2 7q-5 2-9 0z" fill="#fbc928"/></svg></button>
	<button class="task" aria-label="Sticky Notes"><svg width="34" height="32" viewBox="0 0 34 32"><path d="M2 8l12-5 5 16-12 7z" fill="#8fd08a"/><path d="M8 8l13-1 1 18H9z" fill="#a8d4f4"/><path d="M13 12l15-5 5 15-14 5z" fill="#f7e27a"/></svg></button>
	<button class="task" aria-label="Chrome"><svg width="32" height="32" viewBox="0 0 32 32"><circle cx="16" cy="16" r="15" fill="#f4c430"/><path d="M3 8.500A15 15 0 0 1 29 8.500H16L9.500 19.700z" fill="#d9432f"/><path d="M3 8.500L9.500 19.700 16 23l-1.500 8A15 15 0 0 1 3 8.500z" fill="#2fa04e"/><circle cx="16" cy="16" r="7.500" fill="#fff"/><circle cx="16" cy="16" r="5.800" fill="#3f7de0"/></svg></button>
	<button class="task" aria-label="Outlook"><svg width="32" height="32" viewBox="0 0 32 32"><path d="M2 4l3-3h25v29H2z" fill="#f3b03a"/><path d="M4 4h24v24H4z" fill="#fbdc90"/><ellipse cx="11" cy="13" rx="5.500" ry="8" fill="none" stroke="#e8920f" stroke-width="4"/><circle cx="25" cy="14" r="5" fill="#fff" stroke="#e09020"/><path d="M25 11v3h3" fill="none" stroke="#c33"/><path d="M4 24l12-2 13-2v9H5z" fill="#fff"/><path d="M5 22l12 5 11-7" fill="none" stroke="#e0a040"/></svg></button>
	<button class="task stacked" aria-label="AutoCAD"><svg width="32" height="32" viewBox="0 0 32 32"><path d="M1 4h30v27H1z" fill="#1a1a1a"/><path d="M20 6h10v16H20z" fill="#555"/><path d="M20 8h10M20 12h10M20 16h10M20 20h10" stroke="#aaa" stroke-dasharray="1 2 2 1"/><path d="M1 24l30-2v9H1z" fill="#d8161c"/><path d="M4 21L12 1h6l5 19h-5l-1-4h-6l-2 5zM12 12h4l-2-6z" fill="#e8e8e8" fill-rule="evenodd"/></svg></button>
	<button class="task stacked" aria-label="Explorer"><svg width="34" height="32" viewBox="0 0 34 32"><path d="M2 6l4-4h9l2 3h12l3 3v19H2z" fill="#f4dc8c"/><path d="M4 5h7v3H4zM11 8h8v3h-8z" fill="#fff"/><path d="M6 3h4v3H6z" fill="#3a9a48"/><path d="M14 5h4v3h-4z" fill="#d04030"/><path d="M2 12h30v15H2z" fill="#f8e6a4"/><path d="M7 31V21q0-2 2-2h16q2 0 2 2v10h-5v-7H12v7z" fill="#8fcbe8"/></svg></button>
	<button class="task" aria-label="Acrobat"><svg width="30" height="30" viewBox="0 0 30 30"><path d="M0 0h30v30H0z" fill="#f4f4f4"/><path d="M14 4q3 8-1 14-4 7-8 8 0-4 11-6 9-1 10 2-2 2-8-3-5-5-4-15z" fill="none" stroke="#e02b20" stroke-width="1.500"/></svg></button>
	<button class="task" aria-label="Word"><svg width="32" height="32" viewBox="0 0 32 32"><path d="M8 1h21v24H8z" fill="#eef4fc" stroke="#8aa8d0"/><path d="M1 5l6-4h16v25H1z" fill="#2f66b8"/><path d="M5 8l4 14 4-13 4 13 5-15" fill="none" stroke="#fff" stroke-width="3"/><path d="M17 20l10-2 4 10-12 3z" fill="#f4f4fa"/></svg></button>
	<button class="task active" aria-label="InDesign"><span>Id</span></button>
	<span class="grow"></span>
	<div class="tray">
		<svg width="10" height="12"><path d="M1 8h8L5 4z" fill="#eee"/></svg>
		<svg width="16" height="14" viewBox="0 0 16 14"><path d="M5 1l3 2-3 2-3-2zM11 1l3 2-3 2-3-2zM5 5l3 2-3 2-3-2zM11 5l3 2-3 2-3-2zM8 9l3 2-3 2-3-2z" fill="#fff"/></svg>
		<svg width="14" height="14" viewBox="0 0 14 14"><path d="M1 5h3l4-4v12L4 9H1z" fill="#eee"/><path d="M10 4q3 3 0 6" fill="none" stroke="#ccc"/></svg>
		<svg width="16" height="16" viewBox="0 0 16 16"><path d="M1 1v14" stroke="#fff" stroke-width="1.500"/><path d="M3 2h6v2h6v6H3z" fill="#fff"/><path d="M11 6l5 9H6z" fill="#f4d21f"/><path d="M11 9v3M11 13v1" stroke="#222" stroke-width="1.500"/></svg>
		<svg width="16" height="16" viewBox="0 0 16 16"><path d="M5.500 4.500h9v7h-9zM7 14h6M10 12v2M2.500 1v4M5 1v4M1.500 5h4v3h-4zM3.500 8v5H6" fill="none" stroke="#eee"/></svg>
	</div>
	<div class="clock"><span>15:58</span><span>24/11/2017</span></div>
	<button class="peek" aria-label="Show desktop"></button>
</footer>
</body>
</html>
```
FILE: styles.css
```css
* {
	box-sizing: border-box;
}

body {
	margin: 0;
	height: 100vh;
	display: flex;
	flex-direction: column;
	overflow: hidden;
	background: #535353;
	color: #e6e6e6;
	font-family: "Open Sans", "Noto Sans", sans-serif;
	font-size: 10px;
}

button, input, select {
	margin: 0;
	padding: 0;
	border: 0;
	background: none;
	color: inherit;
	font: inherit;
	appearance: none;
}

input, select {
	min-width: 0;
	outline: 0;
}

svg { display: block; flex: none; }
a { color: inherit; text-decoration: none; }
.defs { position: absolute; width: 0; height: 0; }
.grow { flex: 1; }
.chev { width: 8px; height: 6px; color: #c8c8c8; }
.spin { width: 8px; height: 15px; color: #c8c8c8; }
.ic { width: 20px; height: 20px; color: #c4c4c4; }
.dim { opacity: 0.5; }
.mirror { transform: scaleX(-1); }
.quarter { transform: rotate(90deg); }
.unquarter { transform: rotate(-90deg); }
.pressed { background: #2f2f2f; border-radius: 3px; }

/* menu bar */
.menubar {
	flex: none;
	height: 31px;
	display: flex;
	align-items: center;
	padding-bottom: 2px;
	border-bottom: 1px solid #3a3a3a;
	font-size: 12px;
}

.logo { width: 38px; padding-left: 8px; font-size: 20px; font-weight: 600; color: #a5486f; }
.menus { display: flex; }
.menus a { padding: 0 8px; }
.vsep { width: 1px; height: 22px; background: #464646; margin: 0 8px; }

.badge {
	width: 16px;
	height: 16px;
	margin: 0 10px;
	background: #c4c4c4;
	color: #4c4c4c;
	font-size: 10px;
	font-weight: 700;
	line-height: 16px;
}

.zoom { width: 60px; margin-left: 7px; }
.menubar .vsep + .badge { margin-left: 4px; }
.viewbtn { display: flex; align-items: center; gap: 8px; margin-right: 12px; }
.publish {
	display: flex;
	align-items: center;
	justify-content: center;
	gap: 5px;
	width: 112px;
	height: 25px;
	border: 1px solid #f0f0f0;
	border-radius: 13px;
	font-size: 11px;
}

.workspace { display: flex; align-items: center; gap: 10px; padding: 0 4px; width: 76px; font-size: 11px; }

.search {
	display: flex;
	align-items: center;
	width: 130px;
	height: 20px;
	padding-left: 4px;
	gap: 2px;
	border: 1px solid #666;
	border-radius: 3px;
	background: #464646;
}
.search input { flex: 1; font-size: 10px; }
.search input::placeholder { color: #8a8a8a; }

.winbtns { display: flex; align-self: flex-start; margin: 0 4px 0 16px; border: 1px solid #484848; border-top: 0; }
.winbtns button { display: grid; place-items: center; width: 28px; height: 19px; border-right: 1px solid #484848; }
.winbtns button:last-child { width: 45px; border: 0; }

/* control bar */
.control {
	flex: none;
	height: 59px;
	display: flex;
	padding: 6px 0 5px;
}

.refpoint { display: flex; align-items: center; width: 60px; padding-left: 5px; gap: 18px; }
.grip-v { width: 3px; height: 20px; background: repeating-linear-gradient(#3a3a3a 0 1px, #535353 1px 2px); }

.group {
	flex: none;
	display: grid;
	grid-template-rows: 21px 21px;
	row-gap: 5px;
	align-content: start;
	align-items: center;
	justify-items: center;
}
.group > label { justify-self: end; padding-right: 4px; }
.sep { border-left: 1px solid #474747; }
.sepshort { border-left: 1px solid #474747; height: 21px; }
.row { display: flex; align-items: center; }

.field {
	display: flex;
	align-items: center;
	flex: none;
	width: 86px;
	height: 21px;
	border: 1px solid #6b6b6b;
	border-radius: 2px;
	background: #464646;
}
.field .spin { margin: 0 4px; }
.field input { flex: 1; width: 0; height: 100%; padding-left: 4px; border-left: 1px solid #606060; }
.field input:first-child { border-left: 0; }
.field button { display: grid; place-items: center; width: 18px; height: 100%; border-left: 1px solid #606060; }
.tall { grid-row: 1 / 3; }

.pos { grid-template-columns: 18px 86px 27px 86px 35px; }
.pos .tall { grid-column: 5; grid-row: 1 / 3; }
.scale { grid-template-columns: 27px 86px 34px; border-left: 1px solid #474747; }
.scale .tall { grid-column: 3; grid-row: 1 / 3; height: 22px; width: 22px; display: grid; place-items: center; }
.angle { grid-template-columns: 20px 93px; justify-items: start; }
.angle .field { margin-left: 1px; }
.icons { grid-auto-columns: 27px; padding: 0 4px 0 3px; }
.two { grid-template-columns: 27px 27px; }
.three { grid-template-columns: 27px 27px 27px; }
.four { grid-template-columns: 27px 27px 27px 33px; }
.one { grid-template-columns: 22px; }
.flips { grid-template-columns: 27px 27px 37px; padding-right: 2px; }
.pref { grid-column: 3; display: grid; place-items: center; }
.pref > * { grid-area: 1 / 1; }
.pref b { font: 21px "Liberation Serif", serif; color: #fff; }
.swatches { grid-template-columns: 20px 18px; column-gap: 4px; padding: 0 4px 0 5px; }
.more { display: grid; place-items: center; width: 18px; height: 21px; border: 1px solid #6b6b6b; border-radius: 2px; background: #464646; }
.more svg, .more-arrow { width: 6px; height: 9px; }
.stroke { padding: 0 6px 0 5px; }
.sample { flex: 1; height: 19px; background: #e2e2e2; }
.line { border: solid #e2e2e2; border-width: 6px 4px; background: #000; }
.edge { border-top: 4px solid #e2e2e2; border-right: 4px solid #e2e2e2; box-shadow: inset -1px 2px #555; }
.effects { padding-left: 6px; width: 102px; justify-items: start; }
.effects .row { gap: 10px; }
.effects .row + .row { gap: 0; }
.effects .field { width: 70px; }
.fx { font-size: 13px; color: #c4c4c4; }
.wrap button { width: 22px; height: 22px; padding-left: 1px; }
.corner { grid-template-columns: 27px 86px; padding-right: 5px; }
.autofit { display: flex; align-items: center; gap: 5px; grid-column: 1 / 3; white-space: nowrap; }
.autofit input { width: 12px; height: 12px; border: 1px solid #c0c0c0; border-radius: 2px; background: #464646; }
.style { width: 228px; padding: 0 5px 0 10px; justify-items: start; }
.style .field { width: 182px; margin-left: 10px; }
.style .end { justify-self: end; gap: 7px; }
.light select { flex: 1; height: 19px; padding-left: 7px; background: #e2e2e2; color: #111; }
.last { flex: 1; }
.bolt { display: grid; place-items: center; width: 32px; }

/* work area */
.work { flex: 1; min-height: 0; display: flex; position: relative; }

.tools {
	flex: none;
	width: 42px;
	display: flex;
	flex-direction: column;
	align-items: center;
	padding-right: 2px;
	background: #535353;
	border-right: 2px solid #3c3c3c;
	border-left: 1px solid #444;
}
.toolhead { align-self: stretch; height: 12px; padding: 4px; background: #464646; color: #c8c8c8; }
.grip { display: block; width: 20px; height: 4px; margin: 4px 0 7px; background: repeating-linear-gradient(90deg, #3a3a3a 0 1px, #535353 1px 2px); }
.tools button { position: relative; flex: none; display: grid; place-items: center; width: 28px; height: 24px; }
.sub::after { content: ""; position: absolute; right: 1px; bottom: 1px; border: 2px solid; border-color: transparent #c8c8c8 #c8c8c8 transparent; }
.tools hr { width: 38px; margin: 1px 0; border: 0; border-top: 1px solid #474747; }
.grad { width: 16px; height: 14px; border: 1px solid #ccc; background: linear-gradient(90deg, #444, #bbb); }
.feather { background: linear-gradient(#444 10%, transparent), repeating-conic-gradient(#777 0 25%, #aaa 0 50%) 0 0 / 6px 6px; }
.fillstroke { margin: 2px 0 3px; }
.affects { display: flex; align-items: center; gap: 5px; margin-bottom: 5px; color: #8a8a8a; font: bold 12px "Liberation Serif", serif; }
.tools .affects button { width: 14px; height: 12px; }
.affects i { width: 8px; height: 8px; border: 1px solid #ccc; }
.tools .wide { height: 22px; margin-bottom: 7px; }

.document { flex: 1; min-width: 0; display: flex; flex-direction: column; background: #535353; }
.tabs { flex: none; height: 29px; background: #424242; }
.tab { display: inline-flex; align-items: center; gap: 9px; height: 29px; padding: 0 14px; background: #535353; font-size: 11px; font-weight: 600; }
.board { flex: 1; width: 100%; min-height: 0; }
.rule { fill: #e6e6e6; font-size: 9px; }

.status { flex: none; display: flex; align-items: center; height: 18px; padding-left: 6px; }
.nav { display: grid; place-items: center; width: 20px; }
.pageno { width: 90px; height: 16px; margin: 0 7px 0 5px; }
.open { width: 34px; }
.profile { display: flex; align-items: center; justify-content: space-between; width: 112px; margin-left: 10px; }
.errors { display: flex; align-items: center; gap: 6px; width: 87px; margin-left: 15px; }
.errors i { width: 10px; height: 10px; border-radius: 5px; background: #3fa648; }
.errors .chev { margin-left: auto; }
.scroll { flex: 1; display: flex; align-items: center; gap: 4px; height: 18px; padding: 0 6px; margin-left: 4px; background: #4a4a4a; color: #999; }
.scroll span { flex: 1; height: 15px; margin-left: 240px; border-radius: 6px; background: #686868; }

/* floating panels */
.panels { position: absolute; top: 32px; right: 25px; width: 120px; border: 1px solid #3a3a3a; border-radius: 4px 4px 0 0; background: #535353; font-size: 11px; font-weight: 600; }
.panelhead { display: flex; align-items: center; justify-content: flex-end; gap: 10px; height: 14px; padding-right: 5px; background: #464646; border-bottom: 1px solid #3a3a3a; border-radius: 4px 4px 0 0; color: #c8c8c8; }
.dock { padding-bottom: 3px; border-bottom: 1px solid #3a3a3a; }
.dock:last-child { border: 0; }
.dock .grip { margin: 3px auto 2px; }
.dock button { display: flex; align-items: center; gap: 8px; width: 100%; height: 28px; padding-left: 9px; white-space: nowrap; }
.dock .ic { width: 20px; height: 18px; }

/* taskbar */
.taskbar {
	flex: none;
	display: flex;
	align-items: center;
	height: 40px;
	gap: 4px;
	border-top: 1px solid #8fb2c6;
	background: linear-gradient(120deg, #1a4f70 0, #225f80 60px, #2c7a9c 500px, #4a98bb 560px, #4a96b8 670px, #2e7899 720px, #35799c 950px, #3f80a6 990px, #3c76a2 1350px, #1e5880 1560px, #1b3555 1720px, #1b2f4f 100%);
}
.start { width: 56px; padding-left: 8px; }
.task {
	display: grid;
	place-items: center;
	width: 58px;
	height: 38px;
	border: 1px solid #b4d4e2;
	border-radius: 3px;
	background: linear-gradient(160deg, #9cc2d4 0, #6ba3be 45%, #3f84a5 50%, #4c94b4 100%);
}
.stacked { padding-right: 4px; border-right: 6px double #b4d4e2; }
.active { background: linear-gradient(160deg, #eef6fa, #a9cbdb 50%, #c4dde8); }
.active span { width: 28px; height: 28px; border: 2px solid #e5488f; background: #2f0418; color: #f0509a; font-size: 16px; line-height: 23px; }
.tray { display: flex; align-items: center; gap: 9px; padding-right: 7px; }
.clock { display: flex; flex-direction: column; align-items: center; width: 68px; color: #fff; font-size: 11px; line-height: 17px; }
.peek { width: 14px; height: 38px; margin-left: 4px; border: 1px solid #7088a4; background: linear-gradient(#5a7390, #1f3350 50%); }
```
